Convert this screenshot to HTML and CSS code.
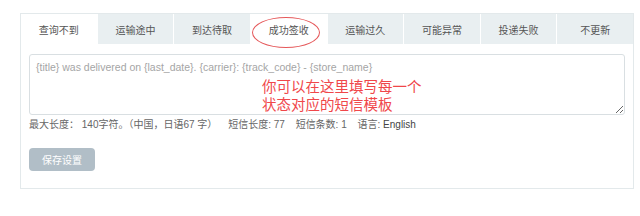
FILE: index.html
```html
<!DOCTYPE html>
<html lang="zh-CN">
<head>
    <meta charset="UTF-8">
    <title>短信模板</title>
    <link rel="stylesheet" href="styles.css">
</head>
<body>
    <div class="sms-panel">
        <div class="tabs">
            <div class="tab active">查询不到</div>
            <div class="tab">运输途中</div>
            <div class="tab">到达待取</div>
            <div class="tab marked">成功签收<span class="ring"></span></div>
            <div class="tab">运输过久</div>
            <div class="tab">可能异常</div>
            <div class="tab">投递失败</div>
            <div class="tab">不更新</div>
        </div>
        <div class="tab-body">
            <div class="editor">
                <textarea placeholder="{title} was delivered on {last_date}. {carrier}: {track_code} - {store_name}"></textarea>
                <div class="note">你可以在这里填写每一个<br>状态对应的短信模板</div>
            </div>
            <div class="stats">
                最大长度： 140字符。（中国，日语67 字）
                <span class="gap">短信长度: 77</span>
                <span class="gap">短信条数: 1</span>
                <span class="gap">语言: <b>English</b></span>
            </div>
            <button type="button" class="save-btn">保存设置</button>
        </div>
    </div>
</body>
</html>
```

FILE: styles.css
```css
body {
    margin: 0;
    padding: 13px 0 0 20px;
    background: #fff;
    font-family: "Liberation Sans", "Noto Sans CJK SC", sans-serif;
    color: #555;
}

.sms-panel {
    width: 612px;
    height: 174px;
    border: 1px solid #e3e9eb;
}

.tabs {
    display: flex;
    height: 30px;
}

.tab {
    flex: 1;
    position: relative;
    display: flex;
    align-items: center;
    justify-content: center;
    background: #e9eff1;
    border-left: 1px solid #fff;
    font-size: 10px;
    color: #555;
}

.tab:first-child {
    border-left: none;
}

.tab.active,
.tab.marked {
    background: #fff;
}

.ring {
    position: absolute;
    left: 1px;
    top: 3px;
    width: 66px;
    height: 29px;
    border: 1px solid #e5585a;
    border-radius: 50%;
}

.tab-body {
    padding: 10px 8px 0 8px;
}

.editor {
    position: relative;
}

.editor textarea {
    display: block;
    box-sizing: border-box;
    width: 596px;
    height: 61px;
    margin: 0;
    padding: 6px 6px;
    border: 1px solid #d9dfe2;
    border-radius: 3px;
    font-family: "Liberation Sans", "Noto Sans CJK SC", sans-serif;
    font-size: 10.5px;
    line-height: 13px;
    resize: vertical;
}

.editor textarea::placeholder {
    color: #a5a5a5;
}

.note {
    position: absolute;
    left: 233px;
    top: 24px;
    color: #f0474a;
    font-size: 14.5px;
    line-height: 18px;
}

.stats {
    margin-top: 3px;
    font-size: 10px;
    line-height: 14px;
    color: #666;
    white-space: nowrap;
}

.stats .gap {
    margin-left: 8px;
}

.stats b {
    font-weight: normal;
    color: #444;
}

.save-btn {
    display: block;
    margin-top: 16px;
    width: 66px;
    height: 23px;
    padding: 0;
    border: none;
    border-radius: 4px;
    background: #b1bec7;
    color: #fff;
    font-family: "Liberation Sans", "Noto Sans CJK SC", sans-serif;
    font-size: 10px;
}
```
